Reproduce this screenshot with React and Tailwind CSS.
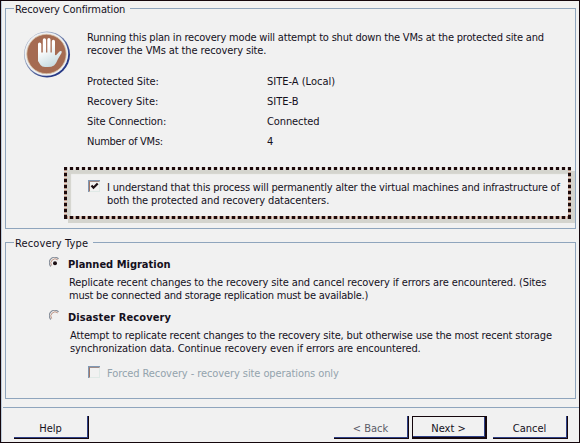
function Line({ children, cls = "" }) {
  return <span className={`block w-max whitespace-nowrap ${cls}`}>{children}</span>;
}

function Group({ title, cls, titleCls, children }) {
  return (
    <section className={`relative mr-[3px] ml-[4px] shrink-0 border border-[#8fa5bd] bg-[radial-gradient(circle,#dcebe8_0.4px,transparent_0.7px)] bg-[length:6px_6px] ${cls}`}>
      <h2 className={`absolute top-[-6px] left-[8px] h-[13px] whitespace-nowrap bg-[#f1f1f1] pl-[1px] ${titleCls}`}>{title}</h2>
      {children}
    </section>
  );
}

function Hand() {
  return (
    <svg width="48" height="48" viewBox="0 0 48 48" className="block">
      <defs>
        <linearGradient id="ring" x1="0" y1="0" x2="1" y2="1">
          <stop offset="0.3" stopColor="#9aa9c2" />
          <stop offset="0.75" stopColor="#283a86" />
        </linearGradient>
        <linearGradient id="palm" x1="0" y1="0" x2="0.4" y2="1">
          <stop offset="0.4" stopColor="#ffffff" />
          <stop offset="1" stopColor="#cbdde2" />
        </linearGradient>
      </defs>
      <circle cx="24" cy="23.500" r="23" fill="url(#ring)" />
      <circle cx="23.400" cy="23" r="21.800" fill="#eef0f3" />
      <circle cx="23.500" cy="23" r="19.700" fill="#a56b52" stroke="#d8c2a4" strokeWidth="0.800" />
      <path d="M15 13q0-1.600 1.600-1.600T18.300 13v8.500h1.500V9q0-1.700 1.600-1.700T23.100 9v12.500h1.200V8.600q0-1.700 1.600-1.700t1.600 1.700v12.900h1.300V10.500q0-1.700 1.600-1.700t1.600 1.700V24l1 .3 3-3.300q1.200-1.200 2.200-.9t.3 1.900l-3.500 6q-2 5-4 6.500-2.500 1.500-6 1.500h-3q-3 0-4.500-2L15 30z" fill="url(#palm)" />
    </svg>
  );
}

function Check({ checked }) {
  return (
    <span className="block h-[12px] w-[12px] shrink-0 border-t border-l border-[#7f97b3]">
      <span className="block h-[11px] w-[11px] border-t border-l border-t-[#a08c88] border-l-[#a07868] border-r border-b border-r-[#dfe9e6] border-b-[#dfe9e6]">
        {checked && (
          <svg width="9" height="9" viewBox="0 0 9 9" className="block">
            <path d="M1.500 3.500L3.500 5.700L7.700 1.500" fill="none" stroke="#1b0f14" strokeWidth="2.200" />
          </svg>
        )}
      </span>
    </span>
  );
}

function Radio({ checked }) {
  return (
    <svg width="12" height="12" viewBox="0 0 12 12" className="block shrink-0">
      <path d="M1.800 9.500A5.300 5.300 0 0 1 9.600 1.900" fill="none" stroke="#868e9a" strokeWidth="1.100" />
      <path d="M2.700 8.600A4.200 4.200 0 0 1 8.800 2.900" fill="none" stroke="#b07c68" strokeWidth="0.800" />
      {checked && <circle cx="6" cy="6.200" r="2" fill="#1b0f14" />}
    </svg>
  );
}

function Button({ children, cls = "" }) {
  return (
    <button className={`h-[23px] w-[75px] border-r border-b-1 border-[#14060c] ${cls}`}>
      <span className="flex h-full items-center justify-center border-r border-b border-[#2f4086] pt-[3px]">{children}</span>
    </button>
  );
}

const hDots = "bg-[repeating-linear-gradient(90deg,#1b0a0c_0px_3px,#bd9888_3px_4px,#dedad4_4px_5px,#bd9888_5px_6px)]";
const hDotsLight = "bg-[repeating-linear-gradient(90deg,#1b0a0c_0px_3px,#d8cfcc_3px_4px,#eef0ee_4px_5px,#d8cfcc_5px_6px)]";
const vDots = "bg-[repeating-linear-gradient(180deg,#1b0a0c_0px_3px,#bd9888_3px_4px,#dedad4_4px_5px,#bd9888_5px_6px)]";

function DottedFrame({ children }) {
  return (
    <div className="relative h-[52px] w-[507px] shadow-[4px_4px_0_#d4d4ce,inset_7px_7px_1px_#d4d4ce]">
      <i className={`absolute top-0 left-0 h-full w-[3px] ${vDots}`} />
      <i className={`absolute top-0 right-0 h-full w-[3px] ${vDots}`} />
      <i className={`absolute top-0 left-0 h-[3px] w-full ${hDotsLight}`} />
      <i className={`absolute bottom-0 left-0 h-[3px] w-full ${hDots}`} />
      {children}
    </div>
  );
}

export default function App() {
  return (
    <main className="flex h-[443px] w-[580px] flex-col overflow-hidden border border-[#14060c] bg-[#f1f1f1] pt-[7px] font-['DejaVu_Sans_Condensed','DejaVu_Sans',sans-serif] text-[11px] leading-[13px] text-[#14101c] shadow-[inset_1px_0_0_#bccbdb]">
      <Group title="Recovery Confirmation" cls="h-[221px]" titleCls="w-[116px] tracking-[-0.13px]">
        <div className="flex pt-[22px] pl-[17px]">
          <Hand />
          <div className="pl-[16px]">
            <Line cls="tracking-[-0.195px]">Running this plan in recovery mode will attempt to shut down the VMs at the protected site and</Line>
            <Line cls="tracking-[-0.11px]">recover the VMs at the recovery site.</Line>
            <dl className="mt-[15px] grid grid-cols-[180px_auto] leading-[20px]">
              <dt><Line cls="tracking-[-0.06px]">Protected Site:</Line></dt><dd><Line>SITE-A (Local)</Line></dd>
              <dt><Line>Recovery Site:</Line></dt><dd><Line>SITE-B</Line></dd>
              <dt><Line cls="tracking-[-0.15px]">Site Connection:</Line></dt><dd><Line cls="tracking-[-0.1px]">Connected</Line></dd>
              <dt><Line cls="tracking-[-0.25px]">Number of VMs:</Line></dt><dd><Line>4</Line></dd>
            </dl>
          </div>
        </div>
        <div className="pt-[15px] pl-[58px]">
          <DottedFrame>
            <label className="flex pt-[14px] pl-[24px]">
              <span className="mt-[-1px]"><Check checked /></span>
              <span className="pl-[7px]">
                <Line cls="tracking-[-0.18px]">I understand that this process will permanently alter the virtual machines and infrastructure of</Line>
                <Line cls="tracking-[-0.1px]">both the protected and recovery datacenters.</Line>
              </span>
            </label>
          </DottedFrame>
        </div>
      </Group>
      <Group title="Recovery Type" cls="mt-[13px] h-[157px]" titleCls="w-[79px] tracking-[0.12px]">
        <div className="pt-[15px] pl-[43px]">
          <label className="flex gap-[7px]"><span className="mt-[-1px]"><Radio checked /></span><Line cls="font-bold">Planned Migration</Line></label>
          <div className="pt-[5px] pl-[20px]">
            <Line cls="tracking-[-0.12px]">Replicate recent changes to the recovery site and cancel recovery if errors are encountered. (Sites</Line>
            <Line cls="tracking-[-0.205px]">must be connected and storage replication must be available.)</Line>
          </div>
          <label className="flex gap-[7px] pt-[9px]"><span className="mt-[-1px]"><Radio /></span><Line cls="font-bold tracking-[0.1px]">Disaster Recovery</Line></label>
          <div className="pt-[5px] pl-[21px]">
            <Line cls="tracking-[-0.15px]">Attempt to replicate recent changes to the recovery site, but otherwise use the most recent storage</Line>
            <Line cls="tracking-[-0.1px]">synchronization data. Continue recovery even if errors are encountered.</Line>
          </div>
          <label className="flex pt-[12px] pl-[39px] text-[#93a3ad]">
            <span className="mt-[-1px]"><Check /></span>
            <Line cls="pl-[7px] tracking-[-0.09px]">Forced Recovery - recovery site operations only</Line>
          </label>
        </div>
      </Group>
      <footer className="mt-[8px] ml-[2px] flex border-t border-[#8fa5bd] pt-[8px] pl-[11px]">
        <Button>Help</Button>
        <Button cls="ml-[245px] text-[#5c5c68]">&lt; Back</Button>
        <Button cls="ml-[3px] border-t border-r-2 border-b-2 border-l">Next &gt;</Button>
        <Button cls="ml-[6px]">Cancel</Button>
      </footer>
    </main>
  );
}
